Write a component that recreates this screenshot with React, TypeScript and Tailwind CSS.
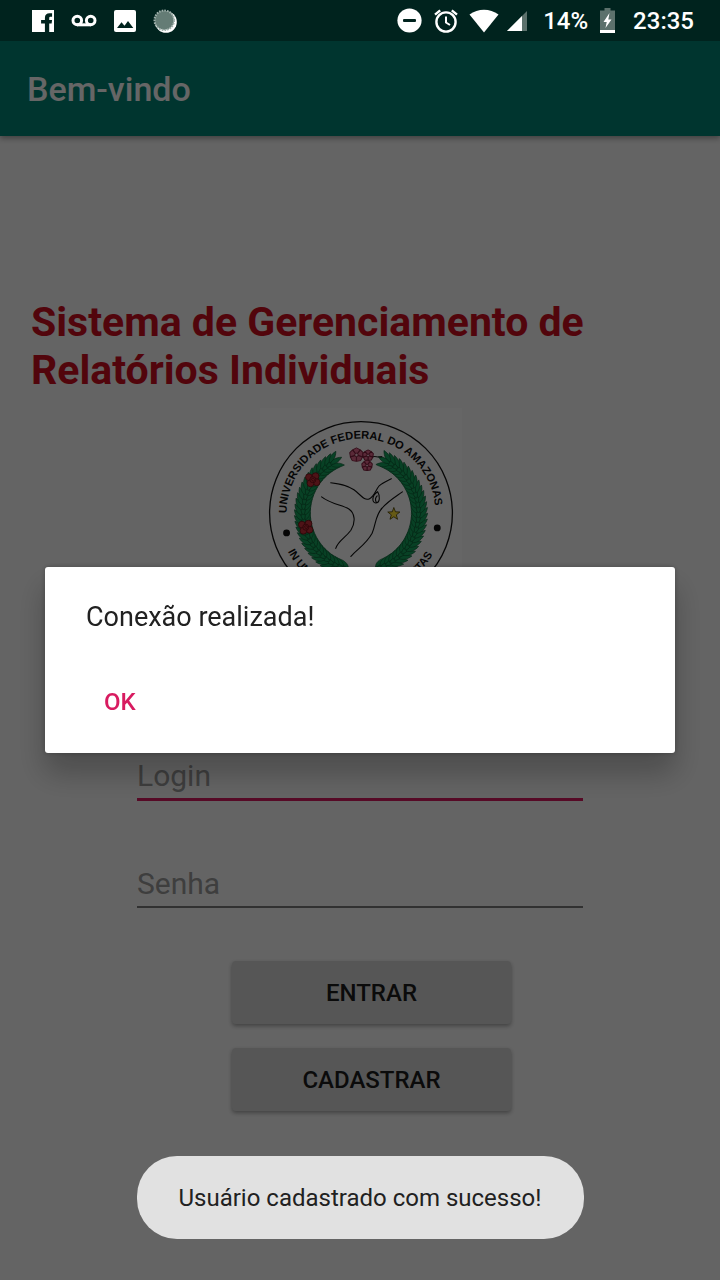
import React from "react";

const CX = 100;
const CY = 104;
const WREATH_RADIUS = 57;

function polar(radius: number, degrees: number) {
  const a = (degrees * Math.PI) / 180;
  return { x: CX + radius * Math.cos(a), y: CY - radius * Math.sin(a) };
}

// One half of the wreath: leaves grow from the `root` angle up to the `tip` angle.
function Branch({ tip, root }: { tip: number; root: number }) {
  const clockwise = root > tip;
  const step = clockwise ? 5 : -5;
  const count = Math.floor(Math.abs(root - tip) / 5);
  const leaves = [];
  for (let i = count; i >= 0; i--) {
    const angle = tip + step * i;
    const heading = clockwise ? 90 - angle : -90 - angle;
    for (const side of [-1, 1, 0]) {
      const p = polar(WREATH_RADIUS + side * 1.5, angle);
      const splay = side * (clockwise ? -30 : 30);
      leaves.push(
        <path
          key={`${i}${side}`}
          d="M0 0C3-3.2 8-3 13 0C8 2.600 3 2.600 0 0Z"
          transform={`translate(${p.x.toFixed(2)} ${p.y.toFixed(2)}) rotate(${heading + splay})`}
        />,
      );
    }
  }
  return (
    <g fill="#15a35c" stroke="#0b5a33" strokeWidth="0.6">
      {leaves}
    </g>
  );
}

function Flower({ x, y, r }: { x: number; y: number; r: number }) {
  return (
    <g transform={`translate(${x} ${y})`} stroke="#7a1a38" strokeWidth="0.9">
      {[0, 72, 144, 216, 288].map((a) => (
        <path
          key={a}
          d={`M0 0L${-r * 0.5} ${-r * 0.75}L0 ${-r}L${r * 0.5} ${-r * 0.75}Z`}
          transform={`rotate(${a})`}
          fill="#e0688c"
        />
      ))}
      <circle r={r * 0.25} fill="#f4c6d4" />
    </g>
  );
}

function Rose({ x, y }: { x: number; y: number }) {
  return (
    <g transform={`translate(${x} ${y})`} fill="#c4303a" stroke="#6b0c14" strokeWidth="0.8">
      <circle cx="-3.500" cy="-2.500" r="3.400" />
      <circle cx="3" cy="-3.500" r="3.400" />
      <circle cx="4" cy="2.500" r="3.400" />
      <circle cx="-2" cy="3.500" r="3.400" />
      <circle cx="0.300" cy="0" r="3" />
      <path d="M-1.500 0.500C-1.500-2 2-2 2 0S-0.500 2 0 0.300" />
    </g>
  );
}

function Seal() {
  return (
    <svg
      viewBox="0 0 200 200"
      className="block size-[202px] bg-white"
      role="img"
      aria-label="Universidade Federal do Amazonas"
    >
      <defs>
        <path id="seal-top" d="M26.300 104A73.700 73.700 0 0 1 173.700 104" />
        <path id="seal-bottom" d="M27.500 142A82 82 0 0 0 173.700 140" />
      </defs>
      <circle cx="100" cy="104" r="90.500" fill="none" stroke="#111" strokeWidth="1.300" />
      <g fill="#111" fontFamily="'Liberation Sans', Arial, sans-serif" fontSize="11" fontWeight="700">
        <text>
          <textPath href="#seal-top">UNIVERSIDADE FEDERAL DO AMAZONAS</textPath>
        </text>
        <text>
          <textPath href="#seal-bottom">IN UNIVERSA SCIENTIA VERITAS</textPath>
        </text>
      </g>
      <circle cx="26.300" cy="123.700" r="3.400" fill="#111" />
      <circle cx="175.500" cy="118.700" r="3.400" fill="#111" />
      <Branch tip={122} root={257} />
      <Branch tip={60} root={-75} />
      <path d="M110 49C114 46 116 50 121 48" fill="none" stroke="#222" strokeWidth="1" />
      <Flower x={95.5} y={46.5} r={7} />
      <Flower x={107} y={47} r={5.5} />
      <Flower x={106} y={57} r={5.5} />
      <Rose x={52} y={71} />
      <Rose x={45} y={118} />
      <g fill="none" stroke="#111" strokeWidth="1.100" strokeLinecap="round">
        <path d="M70 74C78 75 86 76 93 81C100 86 103 92 108 90C113 88 114 82 118 77C121 74 126 72 130 70" />
        <path d="M61 88C70 95 81 96 88 100C94 104 95 113 90 121C84 129 77 132 75 139" />
        <path d="M141 83C134 88 127 92 121 99C114 106 115 115 111 124C105 135 96 140 90 147" />
        <path d="M116.500 83C110 87 111 94 114.500 94C119 94 119 87 116.500 83ZM116 87C114 89 114 91 115 93" />
      </g>
      <path
        d="M132.500 98.500L134.100 102.800L138.500 103L135 105.800L136.200 110.200L132.500 107.700L128.700 110.200L130 105.800L126.500 103L131 102.800Z"
        fill="#ffe135"
        stroke="#4a3d00"
        strokeWidth="0.800"
      />
    </svg>
  );
}

function StatusBar() {
  return (
    <div className="relative z-20 flex h-[41px] items-center justify-between bg-[#00231e] pr-[26px] pl-8 text-2xl font-medium text-white">
      <div className="flex items-center gap-[17px]">
        <svg viewBox="0 0 23 23" className="size-[22px]" aria-hidden="true">
          <path
            fill="#fff"
            d="M0 0H23V23H18V14H20.500L21 10.500H18V8.500C18 7.300 18.500 7 19.500 7H21V3.500H18.300C15.200 3.500 13.500 5.200 13.500 8V10.500H9.500V14H13.500V23H0Z"
          />
        </svg>
        <svg viewBox="0 0 26 24" className="h-6 w-[26px]" fill="none" stroke="#fff" strokeWidth="3" aria-hidden="true">
          <circle cx="6.300" cy="11.500" r="4.300" />
          <circle cx="19.700" cy="11.500" r="4.300" />
          <path d="M6 15.800H20" />
        </svg>
        <svg viewBox="0 0 22 22" className="size-[22px]" aria-hidden="true">
          <rect width="22" height="22" rx="2" fill="#fff" />
          <path d="M3 18L7.500 12.200L10.500 15.700L14 11L19.300 18Z" fill="#00231e" />
        </svg>
        <svg viewBox="0 0 24 24" className="size-6" aria-hidden="true">
          <circle cx="13" cy="13" r="10.800" fill="#fff" />
          <circle cx="11.300" cy="11.300" r="9.800" fill="#647c75" />
          <circle
            cx="11.300"
            cy="11.300"
            r="9.800"
            fill="none"
            stroke="#9fb0ab"
            strokeWidth="2"
            strokeDasharray="1.600 1.100"
          />
        </svg>
      </div>
      <div className="flex items-center">
        <svg viewBox="0 0 25 25" className="size-[25px]" aria-hidden="true">
          <circle cx="12.500" cy="12.500" r="12.100" fill="#fff" />
          <rect x="6" y="11" width="13" height="3" rx="1" fill="#00231e" />
        </svg>
        <svg
          viewBox="0 0 24 24"
          className="ml-3 size-6"
          fill="none"
          stroke="#fff"
          strokeWidth="2.400"
          aria-hidden="true"
        >
          <circle cx="12" cy="13" r="9.600" />
          <path d="M1 5.700L6.200 1.300M23 5.700L17.800 1.300" />
          <path d="M12 7.500V13.500L16 16" strokeWidth="2" />
        </svg>
        <svg viewBox="0 0 30 24" className="ml-[11px] h-6 w-[30px]" aria-hidden="true">
          <path d="M0.500 5.500C9-1 21-1 29.500 5.500L15 23.500Z" fill="#fff" />
        </svg>
        <svg viewBox="0 0 20 20" className="ml-2 size-5" aria-hidden="true">
          <path d="M20 0V20H0Z" fill="#5c716c" />
          <path d="M15 5V20H0Z" fill="#fff" />
        </svg>
        <span className="ml-4 pt-px">14%</span>
        <svg viewBox="0 0 15 25" className="ml-3 h-[25px] w-[15px]" aria-hidden="true">
          <path d="M4.500 0H10.500V2.500H15V22H0V2.500H4.500Z" fill="#5c716c" />
          <path d="M0 22H15V25H0Z" fill="#fff" />
          <path d="M9.500 5L3.500 14H6.700L5.500 20L11.500 11.500H8.300Z" fill="#fff" />
        </svg>
        <span className="ml-[18px] pt-px">23:35</span>
      </div>
    </div>
  );
}

const field =
  "block w-full bg-transparent text-[30px] leading-9 text-[#222] outline-none placeholder:text-[#9b9b9b] placeholder:opacity-100";
const action =
  "h-[63px] w-full rounded-sm bg-[#d6d7d7] text-2xl font-medium text-[#1c1c1c] shadow-[0_2px_4px_rgba(0,0,0,0.35)]";

export default function App() {
  return (
    <div className="flex min-h-screen flex-col bg-[#fafafa] font-['Roboto',sans-serif]">
      <StatusBar />
      <header className="flex h-[95px] items-center bg-[#008577] px-[27px] shadow-[0_2px_6px_rgba(0,0,0,0.4)]">
        <h1 className="text-[34px] leading-10 font-medium text-white">Bem-vindo</h1>
      </header>

      <main className="flex flex-col pt-[162px] pb-8">
        <h2 className="px-[31px] text-[41px] leading-12 font-bold text-[#cc0e1f]">
          Sistema de Gerenciamento de Relatórios Individuais
        </h2>
        <div className="mt-3.5 flex justify-center pl-0.5">
          <Seal />
        </div>
        <form className="mx-[137px] mt-[148px]" onSubmit={(e) => e.preventDefault()}>
          <input
            type="text"
            aria-label="Login"
            placeholder="Login"
            className={`${field} border-b-3 border-[#d81b60] pb-1`}
          />
          <input
            type="password"
            aria-label="Senha"
            placeholder="Senha"
            className={`${field} mt-[65px] border-b-2 border-[#7a7a7a] pb-1`}
          />
          <div className="ml-[95px] mt-[53px] flex w-[279px] flex-col gap-6">
            <button type="submit" className={action}>
              ENTRAR
            </button>
            <button type="button" className={action}>
              CADASTRAR
            </button>
          </div>
        </form>
      </main>

      <div className="fixed inset-0 z-10 flex items-center justify-center bg-black/60 px-[45px] pt-10">
        <div
          role="dialog"
          aria-modal="true"
          aria-labelledby="dialog-message"
          className="w-full rounded-[3px] bg-white px-[41px] pt-8 pb-[18px] shadow-[0_20px_30px_rgba(0,0,0,0.25),0_0_5px_rgba(0,0,0,0.25)]"
        >
          <p id="dialog-message" className="text-[27px] leading-9 text-[#212121]">
            Conexão realizada!
          </p>
          <button
            type="button"
            className="mt-[34px] flex h-[66px] items-center px-[18px] text-2xl font-medium text-[#d81b60]"
          >
            OK
          </button>
        </div>
      </div>

      <div className="pointer-events-none fixed inset-x-0 bottom-[41px] z-20 flex justify-center">
        <div
          role="status"
          className="rounded-[40px] bg-[#e1e1e1] px-[42px] pt-[26px] pb-6 text-2xl leading-[33px] text-[#212121]"
        >
          Usuário cadastrado com sucesso!
        </div>
      </div>
    </div>
  );
}
